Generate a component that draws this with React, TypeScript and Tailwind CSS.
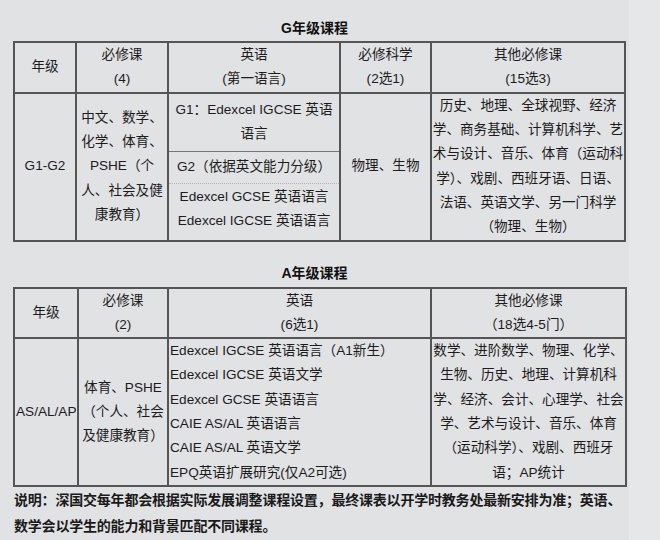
import React from "react";

const cell = "border-2 border-[#555] p-0 text-center align-middle";

const Lines = ({ lines, className = "" }: { lines: string[]; className?: string }) => (
  <div className={className}>
    {lines.map((l, i) => (
      <div key={i} className="leading-[24.3px] whitespace-nowrap">
        {l}
      </div>
    ))}
  </div>
);

const GTable = () => (
  <table className="table-fixed border-collapse w-[613px] text-[13.6px] text-[#1c1c1c]">
    <colgroup>
      <col className="w-[62px]" />
      <col className="w-[92px]" />
      <col className="w-[172px]" />
      <col className="w-[91px]" />
      <col className="w-[194px]" />
    </colgroup>
    <tbody>
      <tr className="h-[50px]">
        <td className={cell}>年级</td>
        <td className={cell}>
          <Lines lines={["必修课", "(4)"]} />
        </td>
        <td className={cell}>
          <Lines lines={["英语", "(第一语言)"]} />
        </td>
        <td className={cell}>
          <Lines lines={["必修科学", "(2选1)"]} />
        </td>
        <td className={cell}>
          <Lines lines={["其他必修课", "(15选3)"]} />
        </td>
      </tr>
      <tr className="h-[59px]">
        <td className={cell} rowSpan={2}>
          G1-G2
        </td>
        <td className={cell} rowSpan={2}>
          <Lines lines={["中文、数学、", "化学、体育、", "PSHE（个", "人、社会及健", "康教育）"]} />
        </td>
        <td className={`${cell} border-b border-b-[#777]`}>
          <Lines lines={["G1：Edexcel IGCSE 英语", "语言"]} />
        </td>
        <td className={cell} rowSpan={2}>
          物理、生物
        </td>
        <td className={cell} rowSpan={2}>
          <Lines
            lines={[
              "历史、地理、全球视野、经济",
              "学、商务基础、计算机科学、艺",
              "术与设计、音乐、体育（运动科",
              "学）、戏剧、西班牙语、日语、",
              "法语、英语文学、另一门科学",
              "（物理、生物）",
            ]}
          />
        </td>
      </tr>
      <tr className="h-[89px]">
        <td className={`${cell} border-t border-t-[#777] align-top`}>
          <div className="h-[32px] flex items-center justify-center border-b border-dotted border-[#b5b5b5] whitespace-nowrap">
            G2（依据英文能力分级）
          </div>
          <Lines className="pt-[1px]" lines={["Edexcel GCSE 英语语言", "Edexcel IGCSE 英语语言"]} />
        </td>
      </tr>
    </tbody>
  </table>
);

const ATable = () => (
  <table className="table-fixed border-collapse w-[614px] text-[13.6px] text-[#1c1c1c]">
    <colgroup>
      <col className="w-[64px]" />
      <col className="w-[90px]" />
      <col className="w-[263px]" />
      <col className="w-[195px]" />
    </colgroup>
    <tbody>
      <tr className="h-[50px]">
        <td className={cell}>年级</td>
        <td className={cell}>
          <Lines lines={["必修课", "(2)"]} />
        </td>
        <td className={cell}>
          <Lines lines={["英语", "(6选1)"]} />
        </td>
        <td className={cell}>
          <Lines lines={["其他必修课", "（18选4-5门）"]} />
        </td>
      </tr>
      <tr className="h-[147px]">
        <td className={`${cell} text-left pl-[1px]`}>AS/AL/AP</td>
        <td className={cell}>
          <Lines lines={["体育、PSHE", "（个人、社会", "及健康教育）"]} />
        </td>
        <td className={`${cell} text-left pl-[1px]`}>
          <Lines
            lines={[
              "Edexcel IGCSE 英语语言（A1新生）",
              "Edexcel IGCSE 英语文学",
              "Edexcel GCSE 英语语言",
              "CAIE AS/AL 英语语言",
              "CAIE AS/AL 英语文学",
              "EPQ英语扩展研究(仅A2可选)",
            ]}
          />
        </td>
        <td className={cell}>
          <Lines
            lines={[
              "数学、进阶数学、物理、化学、",
              "生物、历史、地理、计算机科",
              "学、经济、会计、心理学、社会",
              "学、艺术与设计、音乐、体育",
              "（运动科学）、戏剧、西班牙",
              "语；AP统计",
            ]}
          />
        </td>
      </tr>
    </tbody>
  </table>
);

export default function App() {
  return (
    <div className="w-[660px] h-[540px] overflow-hidden flex bg-[#e6e7e9] font-['Liberation_Sans','Noto_Sans_CJK_SC',sans-serif]">
      <div className="w-[629px] shrink-0 bg-[#e1e2e4] pt-[18px]">
        <div className="h-[20px] leading-[20px] text-center text-[14px] font-bold text-[#111]">G年级课程</div>
        <div className="mt-[3px] ml-[13px]">
          <GTable />
        </div>
        <div className="mt-[21px] h-[20px] leading-[20px] text-center text-[14px] font-bold text-[#111]">A年级课程</div>
        <div className="mt-[4px] ml-[13px]">
          <ATable />
        </div>
        <div className="ml-[14px] text-[14px] leading-[26px] font-semibold text-[#1a1a1a] tracking-[-0.2px]">
          <div className="whitespace-nowrap">
            说明：深国交每年都会根据实际发展调整课程设置，最终课表以开学时教务处最新安排为准；英语、
          </div>
          <div className="whitespace-nowrap">数学会以学生的能力和背景匹配不同课程。</div>
        </div>
      </div>
      <div className="flex-1" />
    </div>
  );
}
